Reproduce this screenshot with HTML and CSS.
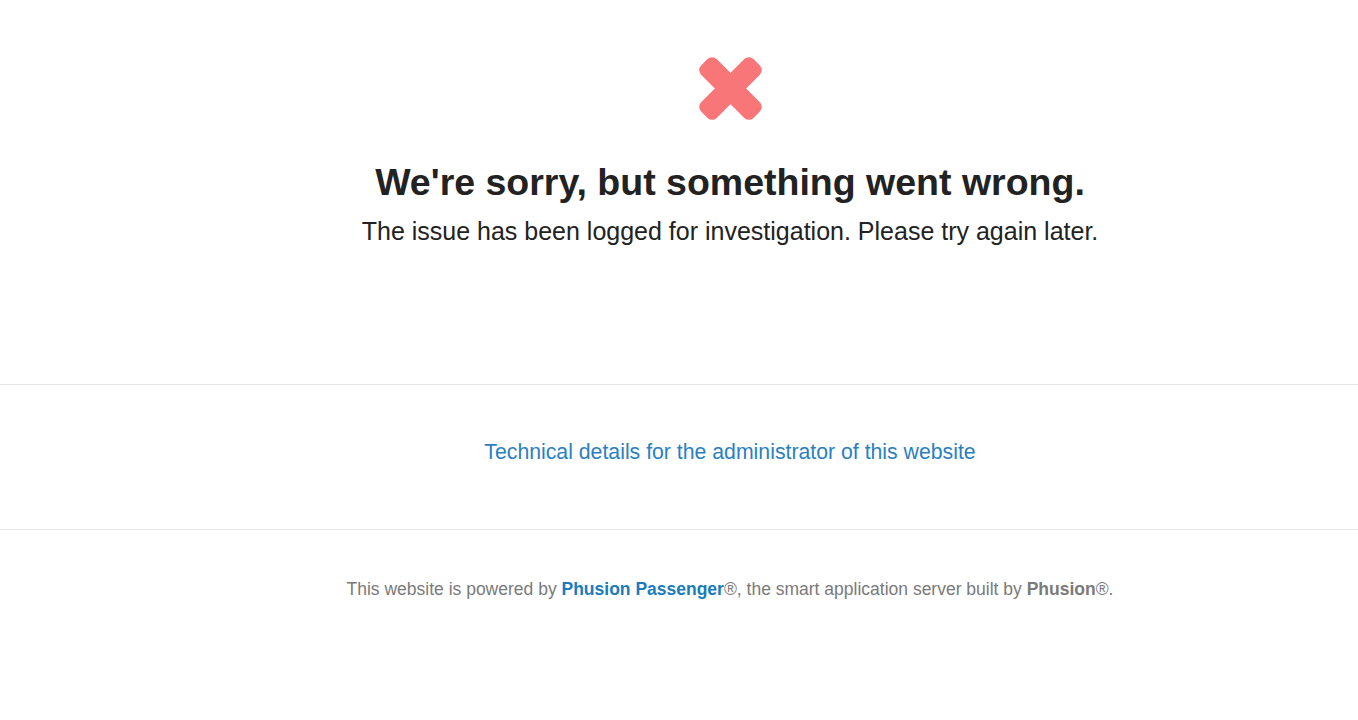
FILE: index.html
```html
<!DOCTYPE html>
<html>
<head>
<meta charset="utf-8">
<title>We're sorry, but something went wrong (500)</title>
<link rel="stylesheet" href="styles.css">
</head>
<body>
<section class="error">
  <svg class="error-icon" width="63" height="63" viewBox="0 0 63 63" aria-hidden="true">
    <g fill="#f87677" transform="rotate(45 31.5 31.5)">
      <rect x="-5.56" y="20.5" width="74.12" height="22" rx="6.5"/>
      <rect x="20.5" y="-5.56" width="22" height="74.12" rx="6.5"/>
    </g>
  </svg>
  <h1 class="error-title">We're sorry, but something went wrong.</h1>
  <p class="error-text">The issue has been logged for investigation. Please try again later.</p>
</section>
<section class="details">
  <a class="details-link" href="#">Technical details for the administrator of this website</a>
</section>
<footer class="footer">
  <p class="footer-text">This website is powered by <a class="footer-link" href="#">Phusion Passenger</a>®, the smart application server built by <b class="footer-brand">Phusion</b>®.</p>
</footer>
</body>
</html>
```

FILE: styles.css
```css
html, body {
  margin: 0;
  padding: 0;
  background: #fff;
}
body {
  font-family: "Liberation Sans", Arial, sans-serif;
  color: #222;
}
.error {
  display: flex;
  flex-direction: column;
  align-items: center;
  padding: 57px 0 0 102px;
  height: 385px;
  box-sizing: border-box;
  border-bottom: 1px solid #e5e5e5;
}
.error-icon {
  display: block;
  overflow: visible;
}
.error-title {
  margin: 40px 0 0;
  font-size: 37.5px;
  line-height: 44px;
  font-weight: bold;
  color: #222;
}
.error-text {
  margin: 12px 0 0;
  font-size: 25px;
  line-height: 30px;
  color: #222;
}
.details {
  height: 145px;
  box-sizing: border-box;
  display: flex;
  justify-content: center;
  align-items: flex-start;
  padding: 55px 0 0 102px;
  border-bottom: 1px solid #e5e5e5;
}
.details-link {
  font-size: 21.25px;
  line-height: 24px;
  color: #2b7fc2;
  text-decoration: none;
}
.footer {
  display: flex;
  justify-content: center;
  padding: 49px 0 0 102px;
}
.footer-text {
  margin: 0;
  font-size: 17.5px;
  line-height: 20px;
  color: #7a7a7a;
}
.footer-link {
  color: #1b7bbd;
  font-weight: bold;
  text-decoration: none;
}
.footer-brand {
  color: #7a7a7a;
}
```
